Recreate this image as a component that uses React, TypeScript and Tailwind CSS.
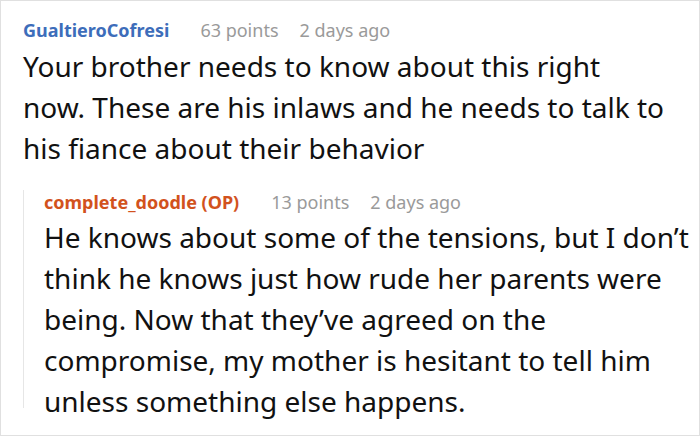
export default function App() {
  return (
    <div className="w-[700px] h-[436px] bg-white border border-[#e0e0e0] overflow-hidden font-['Noto_Sans',sans-serif]">
      <div className="pl-[22px] pt-[17px] flex items-baseline text-[18px] leading-[24px]">
        <span className="font-bold text-[#3d6dba]">GualtieroCofresi</span>
        <span className="ml-[31px] text-[#9a9a9a]">63 points</span>
        <span className="ml-[21px] text-[#9a9a9a]">2 days ago</span>
      </div>
      <p className="pl-[22px] mt-[4px] text-[28px] leading-[41px] text-[#111]">
        Your brother needs to know about this right
        <br />
        now. These are his inlaws and he needs to talk to
        <br />
        his fiance about their behavior
      </p>
      <div className="ml-[22px] mt-[31px] border-l border-[#e6e6e6] pl-[20px] h-[218px]">
        <div className="flex items-baseline text-[18px] leading-[24px] -mt-[10px]">
          <span className="font-bold text-[#d2521d]">complete_doodle (OP)</span>
          <span className="ml-[32px] text-[#9a9a9a]">13 points</span>
          <span className="ml-[21px] text-[#9a9a9a]">2 days ago</span>
        </div>
        <p className="mt-[3px] text-[28px] leading-[41px] text-[#111]">
          He knows about some of the tensions, but I don’t
          <br />
          think he knows just how rude her parents were
          <br />
          being. Now that they’ve agreed on the
          <br />
          compromise, my mother is hesitant to tell him
          <br />
          unless something else happens.
        </p>
      </div>
    </div>
  );
}
